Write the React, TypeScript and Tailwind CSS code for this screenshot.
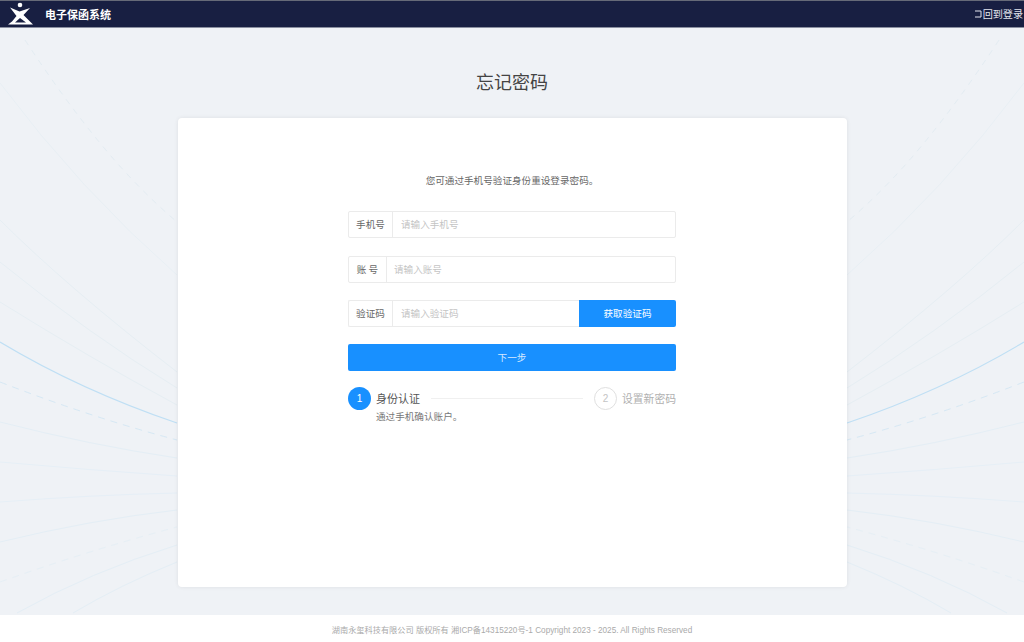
const lines: { d: string; c: string; w?: number; dash?: string }[] = [
  { d: "M25 40Q63 98 100 143T177 222", c: "#e3ecf2", w: 1, dash: "6 6" },
  { d: "M0 83Q80 190 177 275", c: "#e8eff4" },
  { d: "M0 220Q67 287 177 372", c: "#e6eef3" },
  { d: "M0 262Q90 335 177 388", c: "#e6eef3" },
  { d: "M0 302Q90 358 177 405", c: "#e6eef3" },
  { d: "M0 342Q80 390 177 423", c: "#bfdff4", w: 1.1 },
  { d: "M0 382Q90 417 177 440", c: "#d6e8f4", w: 1, dash: "7 6" },
  { d: "M0 422Q90 445 177 458", c: "#e4eef5" },
  { d: "M0 462Q90 470 177 476", c: "#e6eff6" },
  { d: "M0 502Q90 495 177 493", c: "#e6eff6" },
  { d: "M0 542Q90 520 177 510", c: "#e4eef5" },
  { d: "M0 582Q90 550 177 527", c: "#e6eff5", w: 1, dash: "7 6" },
  { d: "M17 613Q90 572 177 545", c: "#e4eef5" },
  { d: "M73 613Q120 585 177 562", c: "#e4eef5" },
];

function Lines() {
  return (
    <>
      {lines.map((l, i) => (
        <path key={i} d={l.d} fill="none" stroke={l.c} strokeWidth={l.w ?? 1} strokeDasharray={l.dash} />
      ))}
    </>
  );
}

function Field({ label, placeholder, sep, pad }: { label: string; placeholder: string; sep: string; pad: string }) {
  return (
    <div className="flex h-[27px] w-[328px] rounded-[2px] border border-[#ebebeb] bg-white">
      <div className={`flex items-center justify-center border-r border-[#ebebeb] text-[9.6px] text-[#666] ${sep}`}>{label}</div>
      <div className={`flex flex-1 items-center text-[9.6px] text-[#c4c4c4] ${pad}`}>{placeholder}</div>
    </div>
  );
}

export default function App() {
  return (
    <div
      className="flex h-[642px] w-[1024px] flex-col overflow-hidden bg-[#eff2f6]"
      style={{ fontFamily: '"Noto Sans CJK SC", "Liberation Sans", sans-serif' }}
    >
      <header className="flex h-[28px] items-center justify-between border-t border-b border-t-[#666a78] border-b-[#8a8fa0] bg-[#181f42] text-white">
        <div className="flex items-center">
          <svg width="32" height="26" viewBox="0 0 32 26" className="ml-[4px]">
            <circle cx="16" cy="4" r="2.3" fill="#fff" />
            <path d="M6 6.5L15.5 10.5L26 7L19.5 14L27 21.5L29 23.5H4L8 20.5L12.5 15Z" fill="#fff" />
            <path d="M16 17L11 21.5H22Z" fill="#181f42" />
          </svg>
          <span className="ml-[9px] text-[11px] font-bold">电子保函系统</span>
        </div>
        <div className="flex items-center pr-px text-[10.1px] text-[#e4e6ee]">
          <svg width="7" height="8" viewBox="0 0 7 8" className="mr-px">
            <path d="M0 1H6V7H0" fill="none" stroke="#e4e6ee" strokeWidth="1" />
          </svg>
          回到登录
        </div>
      </header>

      <main className="relative flex flex-1 flex-col items-center">
        <svg className="absolute top-[-28px] left-0" width="1024" height="642" viewBox="0 0 1024 642">
          <Lines />
          <g transform="translate(1024 0) scale(-1 1)">
            <Lines />
          </g>
        </svg>

        <h1 className="relative mt-[41px] h-[24px] text-[18px] leading-[24px] font-normal text-[#444]">忘记密码</h1>

        <section className="relative mt-[25px] flex h-[469px] w-[669px] flex-col items-center rounded-[4px] bg-white pt-[55px] shadow-[0_0_4px_rgba(0,0,0,0.08)]">
          <p className="h-[14px] text-[9.6px] leading-[14px] text-[#666]">您可通过手机号验证身份重设登录密码。</p>

          <div className="mt-[24px] flex flex-col gap-[17.5px]">
            <Field label="手机号" placeholder="请输入手机号" sep="w-[44px]" pad="pl-2" />
            <Field label="账 号" placeholder="请输入账号" sep="w-[38px]" pad="pl-[7px]" />
            <div className="flex h-[27px] w-[328px]">
              <div className="flex flex-1 rounded-l-[2px] border border-r-0 border-[#ebebeb] bg-white">
                <div className="flex w-[44px] items-center justify-center border-r border-[#ebebeb] text-[9.6px] text-[#666]">验证码</div>
                <div className="flex flex-1 items-center pl-2 text-[9.6px] text-[#c4c4c4]">请输入验证码</div>
              </div>
              <button className="flex w-[97px] items-center justify-center rounded-r-[2px] bg-[#1890ff] text-[9.6px] text-white">获取验证码</button>
            </div>
          </div>

          <button className="mt-[17px] flex h-[27px] w-[328px] items-center justify-center rounded-[2px] bg-[#1890ff] text-[9.6px] text-[#d6eaff]">下一步</button>

          <div className="mt-[16px] w-[328px]">
            <div className="flex h-[23px] items-center">
              <div className="flex h-[23px] w-[23px] items-center justify-center rounded-full bg-[#1890ff] text-[10px] text-white" style={{ fontFamily: '"Liberation Sans", sans-serif' }}>1</div>
              <span className="ml-[5px] text-[11px] text-[#555]">身份认证</span>
              <div className="mx-[11px] h-px flex-1 bg-[#f0f0f0]" />
              <div className="flex h-[23px] w-[23px] items-center justify-center rounded-full border border-[#e0e0e0] text-[10px] text-[#c4c4c4]" style={{ fontFamily: '"Liberation Sans", sans-serif' }}>2</div>
              <span className="ml-[5px] text-[10.8px] text-[#b0b0b0]">设置新密码</span>
            </div>
            <p className="-mt-px ml-[28px] h-[14px] text-[9.6px] leading-[14px] text-[#777]">通过手机确认账户。</p>
          </div>
        </section>
      </main>

      <footer className="relative flex h-[27px] items-center justify-center bg-white text-[8.2px] text-[#aaa]" style={{ fontFamily: '"Liberation Sans", "Noto Sans CJK SC", sans-serif' }}>
        <span className="pt-[5px]">湖南永玺科技有限公司 版权所有 湘ICP备14315220号-1 Copyright 2023 - 2025. All Rights Reserved</span>
      </footer>
    </div>
  );
}
